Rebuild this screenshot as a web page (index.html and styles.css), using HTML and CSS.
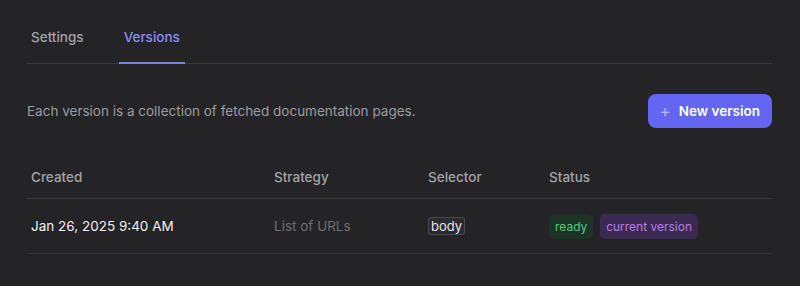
FILE: index.html
```html
<!DOCTYPE html>
<html lang="en">
  <head>
    <meta charset="UTF-8" />
    <meta name="viewport" content="width=device-width, initial-scale=1.0" />
    <title>Versions</title>
    <link rel="stylesheet" href="styles.css">
  </head>
  <body>
    <div class="container">
      <nav class="tabs">
        <a href="#" class="tab">Settings</a>
        <a href="#" class="tab active">Versions</a>
      </nav>

      <div class="intro">
        <p>Each version is a collection of fetched documentation pages.</p>
        <button type="button" class="btn">
          <span class="plus">+</span> New version
        </button>
      </div>

      <table class="versions">
        <thead>
          <tr>
            <th class="col-created">Created</th>
            <th class="col-strategy">Strategy</th>
            <th class="col-selector">Selector</th>
            <th>Status</th>
          </tr>
        </thead>
        <tbody>
          <tr>
            <td>Jan 26, 2025 9:40 AM</td>
            <td class="muted">List of URLs</td>
            <td><code>body</code></td>
            <td>
              <span class="badge ready">ready</span>
              <span class="badge current">current version</span>
            </td>
          </tr>
        </tbody>
      </table>
    </div>
  </body>
</html>
```

FILE: styles.css
```css
body {
  margin: 0;
  background-color: #242326;
  color: #e6e6e6;
  font-family: Inter, "Noto Sans", sans-serif;
  font-size: 13.5px;
}
.container {
  padding: 16px 28px 0 27px;
}

.tabs {
  display: flex;
  border-bottom: 1px solid #3a393d;
}
.tab {
  padding: 13px 4px 17px;
  margin-right: 31px;
  color: #a3a3a6;
  text-decoration: none;
  font-weight: 500;
  border-bottom: 2px solid transparent;
  margin-bottom: -1px;
}
.tab.active {
  color: #8b8ff0;
  border-bottom-color: #7e82dc;
  padding-left: 5px;
  padding-right: 5px;
}

.intro {
  display: flex;
  justify-content: space-between;
  align-items: center;
  margin-top: 30px;
}
.intro p {
  margin: 0;
  color: #9c9ca0;
}
.btn {
  display: flex;
  align-items: center;
  gap: 8px;
  height: 34px;
  padding: 0 12px;
  background-color: #6466f1;
  color: #fff;
  border: none;
  border-radius: 8px;
  font-family: inherit;
  font-size: 13.5px;
  font-weight: 600;
  cursor: pointer;
}
.btn .plus {
  color: #b7b8f7;
  font-weight: 400;
  font-size: 17px;
  line-height: 1;
}

.versions {
  width: 100%;
  margin-top: 26px;
  border-collapse: collapse;
}
.versions th,
.versions td {
  text-align: left;
  padding: 0 4px;
}
.versions th {
  height: 42px;
  padding-top: 2px;
  font-weight: 500;
  color: #a3a3a6;
  border-bottom: 1px solid #3a393d;
}
.versions td {
  height: 54px;
  color: #f2f2f2;
  border-bottom: 1px solid #333236;
}
.col-created { width: 235px; }
.col-strategy { width: 146px; }
.col-selector { width: 113px; }
.versions td.muted {
  color: #6f6e73;
}
code {
  font-family: Inter, "Noto Sans", sans-serif;
  font-size: 13px;
  padding: 0 2px;
  border: 1px solid #4a494e;
  border-radius: 3px;
  background-color: #2b2a2e;
  color: #e6e6e6;
}
.badge {
  display: inline-block;
  padding: 5px 6px;
  border-radius: 5px;
  font-size: 12px;
  margin-right: 3px;
}
.badge.ready {
  background-color: #1e3328;
  color: #4ccf7a;
}
.badge.current {
  background-color: #3a2a52;
  color: #b77ee8;
}
```
